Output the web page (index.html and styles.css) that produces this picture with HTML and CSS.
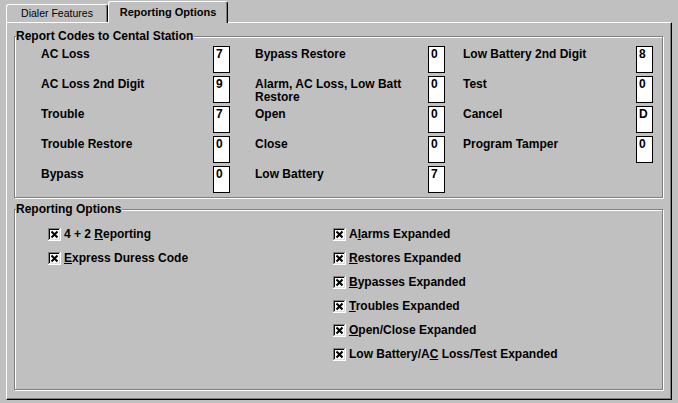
FILE: index.html
```html
<!DOCTYPE html>
<html>
<head>
<meta charset="utf-8">
<link rel="stylesheet" href="styles.css">
</head>
<body>
<svg class="defs" width="0" height="0" aria-hidden="true">
  <symbol id="cbx" viewBox="0 0 13 13">
    <rect width="13" height="13" fill="#fff"/>
    <path d="M0 0h12v1H1v11H0z" fill="#808080"/>
    <path d="M1 1h10v1H2v9H1z" fill="#000"/>
    <path d="M12 0h1v13H0v-1h12z" fill="#fff"/>
    <path d="M11 1h1v11H1v-1h10z" fill="#dfdfdf"/>
    <path d="M3.5 3.5L9.5 9.5M9.5 3.5L3.5 9.5" stroke="#000" stroke-width="2.1"/>
  </symbol>
</svg>
<div class="window">
  <div class="tabs">
    <div class="tab">Dialer Features</div>
    <div class="tab active">Reporting Options</div>
  </div>
  <div class="panel">
    <section class="group codes-group">
      <div class="group-title">Report Codes to Cental Station</div>
      <div class="codes">
        <div class="col col1">
          <div class="row"><div class="lbl">AC Loss</div><div class="val">7</div></div>
          <div class="row"><div class="lbl">AC Loss 2nd Digit</div><div class="val">9</div></div>
          <div class="row"><div class="lbl">Trouble</div><div class="val">7</div></div>
          <div class="row"><div class="lbl">Trouble Restore</div><div class="val">0</div></div>
          <div class="row"><div class="lbl">Bypass</div><div class="val">0</div></div>
        </div>
        <div class="col col2">
          <div class="row"><div class="lbl">Bypass Restore</div><div class="val">0</div></div>
          <div class="row"><div class="lbl">Alarm, AC Loss, Low Batt Restore</div><div class="val">0</div></div>
          <div class="row"><div class="lbl">Open</div><div class="val">0</div></div>
          <div class="row"><div class="lbl">Close</div><div class="val">0</div></div>
          <div class="row"><div class="lbl">Low Battery</div><div class="val">7</div></div>
        </div>
        <div class="col col3">
          <div class="row"><div class="lbl">Low Battery 2nd Digit</div><div class="val">8</div></div>
          <div class="row"><div class="lbl">Test</div><div class="val">0</div></div>
          <div class="row"><div class="lbl">Cancel</div><div class="val">D</div></div>
          <div class="row"><div class="lbl">Program Tamper</div><div class="val">0</div></div>
        </div>
      </div>
    </section>
    <section class="group opts-group">
      <div class="group-title">Reporting Options</div>
      <div class="opts">
        <div class="opt-col left">
          <div class="opt"><svg class="cb"><use href="#cbx"/></svg><span>4 + 2 <u>R</u>eporting</span></div>
          <div class="opt"><svg class="cb"><use href="#cbx"/></svg><span><u>E</u>xpress Duress Code</span></div>
        </div>
        <div class="opt-col right">
          <div class="opt"><svg class="cb"><use href="#cbx"/></svg><span>A<u>l</u>arms Expanded</span></div>
          <div class="opt"><svg class="cb"><use href="#cbx"/></svg><span><u>R</u>estores Expanded</span></div>
          <div class="opt"><svg class="cb"><use href="#cbx"/></svg><span><u>B</u>ypasses Expanded</span></div>
          <div class="opt"><svg class="cb"><use href="#cbx"/></svg><span><u>T</u>roubles Expanded</span></div>
          <div class="opt"><svg class="cb"><use href="#cbx"/></svg><span><u>O</u>pen/Close Expanded</span></div>
          <div class="opt"><svg class="cb"><use href="#cbx"/></svg><span>Low Battery/A<u>C</u> Loss/Test Expanded</span></div>
        </div>
      </div>
    </section>
  </div>
</div>
</body>
</html>
```

FILE: styles.css
```css
* { box-sizing: border-box; }

html, body {
  margin: 0;
  padding: 0;
}

body {
  background: #c0c0c0;
  font-family: "Liberation Sans", Arial, sans-serif;
  color: #000;
  width: 678px;
  height: 403px;
  overflow: hidden;
}

.defs {
  position: absolute;
  width: 0;
  height: 0;
}

.tabs {
  display: flex;
  align-items: flex-end;
  height: 22px;
  padding-left: 6px;
}

.tab {
  width: 102px;
  height: 18px;
  border-top: 1px solid #fff;
  border-left: 1px solid #fff;
  border-right: 1px solid #000;
  border-radius: 3px 3px 0 0;
  box-shadow: inset -1px 0 0 #808080;
  background: #c0c0c0;
  font-size: 10.5px;
  line-height: 17px;
  text-align: center;
  white-space: nowrap;
}

.tab.active {
  width: 120px;
  height: 22px;
  margin-bottom: -1px;
  position: relative;
  z-index: 1;
  font-weight: bold;
  font-size: 11px;
  line-height: 15px;
  padding-top: 3px;
}

.panel {
  margin-left: 6px;
  width: 666px;
  height: 378px;
  border: 1px solid;
  border-color: #fff #000 #000 #fff;
  box-shadow: inset -1px -1px 0 #808080;
  padding: 13px 0 0 7px;
}

.group {
  width: 649px;
  border: 1px solid #808080;
  box-shadow: inset 1px 1px 0 #fff, 1px 1px 0 #fff;
}

.group-title {
  width: fit-content;
  margin: -7px 0 0 1px;
  padding: 0 1px 0 0;
  background: #c0c0c0;
  font-weight: bold;
  font-size: 12px;
  line-height: 13px;
  white-space: nowrap;
}

.codes {
  display: flex;
  margin-top: 3px;
  padding-left: 26px;
  padding-bottom: 1px;
}

.col1 { width: 189px; }
.col2 { width: 190px; margin-left: 25px; }
.col3 { width: 190px; margin-left: 18px; }

.row {
  display: flex;
  height: 30px;
}

.lbl {
  flex: 1;
  padding-top: 2px;
  font-weight: bold;
  font-size: 12px;
  line-height: 13px;
}

.val {
  flex: none;
  width: 17px;
  height: 27px;
  border: 1px solid #000;
  background: #fff;
  padding: 1px 0 0 2px;
  font-weight: bold;
  font-size: 12px;
  line-height: 13px;
}

.opts-group {
  margin-top: 11px;
}

.opts {
  display: flex;
  margin-top: 12px;
  padding-left: 33px;
  padding-bottom: 28px;
}

.opt-col {
  display: flex;
  flex-direction: column;
  gap: 11px;
}

.opt-col.left {
  width: 285px;
}

.opt {
  display: flex;
  align-items: flex-start;
  height: 13px;
  font-weight: bold;
  font-size: 12px;
  line-height: 13px;
  white-space: nowrap;
}

.cb {
  flex: none;
  width: 13px;
  height: 13px;
  margin-right: 3px;
}

u {
  text-underline-offset: 1px;
}
```
